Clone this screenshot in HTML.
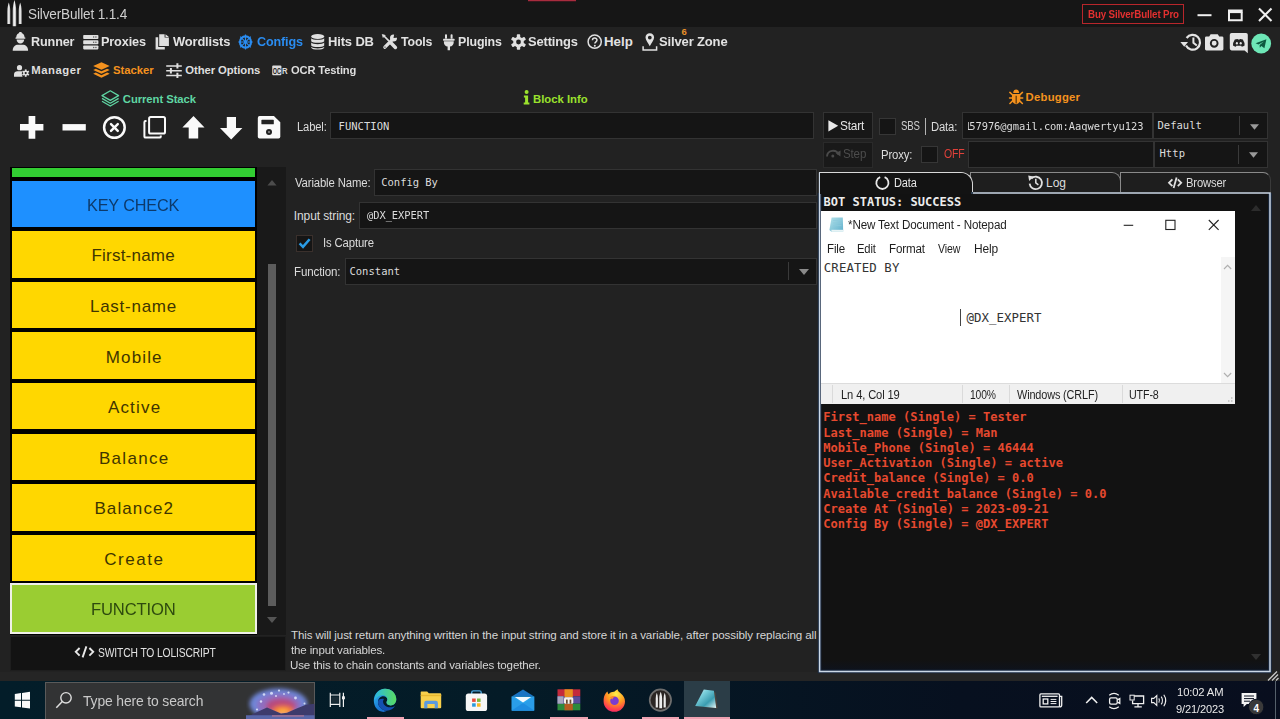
<!DOCTYPE html>
<html><head><meta charset="utf-8"><title>SilverBullet 1.1.4</title>
<style>
*{box-sizing:border-box;margin:0;padding:0}
html,body{width:1280px;height:719px;overflow:hidden;background:#222222;font-family:"Liberation Sans",sans-serif}
body{position:relative}
.a{position:absolute}
.t{position:absolute;white-space:pre;transform-origin:0 0}
.inp{position:absolute;background:#151515;border:1px solid #333333}
.blk{position:absolute;left:12px;width:243px;height:46px;background:#ffd700}
svg{position:absolute;overflow:visible}
.f0{font:400 13.8px/1 "Liberation Sans",sans-serif;color:#cfcfcf}
.f1{font:700 13.3px/1 "Liberation Sans",sans-serif;color:#e2e2e2}
.f2{font:700 13.3px/1 "Liberation Sans",sans-serif;color:#2a8cf0}
.f3{font:700 9.5px/1 "Liberation Sans",sans-serif;color:#e8912a}
.f4{font:700 11.3px/1 "Liberation Sans",sans-serif;color:#dedede}
.f5{font:700 11.3px/1 "Liberation Sans",sans-serif;color:#f5921e}
.f6{font:700 11.3px/1 "Liberation Sans",sans-serif;color:#5fd6a3}
.f7{font:700 11.3px/1 "Liberation Sans",sans-serif;color:#9be22d}
.f8{font:700 10.3px/1 "Liberation Sans",sans-serif;color:#e23030}
.f9{font:400 12px/1 "Liberation Sans",sans-serif;color:#dcdcdc}
.f10{font:400 10.5px/1 "DejaVu Sans Mono","Liberation Mono",monospace;color:#dcdcdc}
.f11{font:400 11.6px/1 "Liberation Sans",sans-serif;color:#d6d6d6}
.f12{font:400 12px/1 "Liberation Sans",sans-serif;color:#e6e6e6}
.f13{font:400 12px/1 "Liberation Sans",sans-serif;color:#4c4c4c}
.f14{font:400 12px/1 "Liberation Sans",sans-serif;color:#d0d0d0}
.f15{font:400 12px/1 "Liberation Sans",sans-serif;color:#e0413a}
.f16{font:700 12px/1 "DejaVu Sans Mono","Liberation Mono",monospace;color:#ececec}
.f17{font:400 12px/1 "Liberation Sans",sans-serif;color:#1e1e1e}
.f18{font:400 12.4px/1 "DejaVu Sans Mono","Liberation Mono",monospace;color:#333333}
.f19{font:400 17px/1 "Liberation Sans",sans-serif;color:#0d3a6b}
.f20{font:400 17px/1 "Liberation Sans",sans-serif;color:#3f3500}
.f21{font:400 17px/1 "Liberation Sans",sans-serif;color:#2e4a0e}
.f22{font:400 12px/1 "Liberation Sans",sans-serif;color:#e2e2e2}
.f23{font:400 15px/1 "Liberation Sans",sans-serif;color:#c9c9c9}
.f24{font:400 11.6px/1 "Liberation Sans",sans-serif;color:#e8e8e8}
.f25{font:700 10px/1 "Liberation Sans",sans-serif;color:#ffffff}
.f26{font:700 12px/1 "DejaVu Sans Mono","Liberation Mono",monospace;color:#e6492f}
</style></head><body>
<!-- title bar -->
<div class="a" style="left:0;top:0;width:1280px;height:27px;background:#161616"></div>
<div class="a" style="left:1082px;top:4px;width:102px;height:20px;border:1px solid #b8262b"></div>
<div class="a" style="left:528px;top:0;width:48px;height:2px;background:linear-gradient(180deg,#a82c3e 0,#a82c3e 50%,#3c161e 50%,#3c161e 100%)"></div>
<!-- app bottom strip -->
<div class="a" style="left:0;top:672px;width:1280px;height:10px;background:#252525"></div>

<!-- label input -->
<div class="inp" style="left:330px;top:112px;width:484px;height:27px"></div>

<!-- stack list -->
<div class="a" style="left:10px;top:167px;width:247px;height:468px;background:#000"></div>
<div class="a" style="left:257px;top:167px;width:29px;height:468px;background:#191919"></div>
<div class="a" style="left:12px;top:168px;width:243px;height:9px;background:#32cd32"></div>
<div class="blk" style="top:181px;height:46px;background:#1e90ff"></div>
<div class="blk" style="top:231px;height:47px"></div>
<div class="blk" style="top:282px;height:46px"></div>
<div class="blk" style="top:332px;height:47px"></div>
<div class="blk" style="top:383px;height:46px"></div>
<div class="blk" style="top:434px;height:46px"></div>
<div class="blk" style="top:484px;height:47px"></div>
<div class="blk" style="top:535px;height:46px"></div>
<div class="a" style="left:10px;top:583px;width:247px;height:50.5px;background:#9acd32;border:2px solid #f0f0e8"></div>
<!-- scrollbar -->
<div class="a" style="left:268px;top:264px;width:8px;height:342px;background:#5c5c5c"></div>
<svg style="left:267px;top:180.300px" width="10" height="5.500" viewBox="0 0 10 6"><path d="M0 6 L5 0 L10 6 Z" fill="#4c4c4c"/></svg>
<svg style="left:267px;top:617px" width="10" height="6" viewBox="0 0 10 6"><path d="M0 0 L5 6 L10 0 Z" fill="#555"/></svg>
<!-- switch button -->
<div class="a" style="left:10px;top:636px;width:275.500px;height:35px;background:#131313;border:1px solid #1e1e1e"></div>

<!-- block info inputs -->
<div class="inp" style="left:374px;top:168.5px;width:443px;height:27px"></div>
<div class="inp" style="left:359px;top:201.5px;width:458px;height:27px"></div>
<div class="inp" style="left:295.5px;top:235px;width:17px;height:17px;border-color:#3a302c"></div>
<div class="inp" style="left:345px;top:257.5px;width:472px;height:27px"></div>
<div class="a" style="left:788px;top:262px;width:1px;height:18px;background:#3a3a3a"></div>
<svg style="left:798.5px;top:268.5px" width="10" height="6" viewBox="0 0 10 6"><path d="M0 0 L5 6 L10 0 Z" fill="#8a8a8a"/></svg>

<!-- debugger toolbar -->
<div class="inp" style="left:822.5px;top:112px;width:50px;height:27px;background:#171717"></div>
<div class="inp" style="left:822.5px;top:141.5px;width:50px;height:26px;background:#191919;border-color:#2a2a2a"></div>
<div class="inp" style="left:879px;top:117.5px;width:17px;height:17px;border-color:#363636"></div>
<div class="a" style="left:925px;top:117.5px;width:1px;height:17.5px;background:#b4b4b4"></div>
<div class="inp" style="left:962px;top:112px;width:191px;height:27px"></div>
<div class="inp" style="left:1152.5px;top:112px;width:115.5px;height:27px"></div>
<div class="a" style="left:1239px;top:116px;width:1px;height:19px;background:#3a3a3a"></div>
<svg style="left:1249.5px;top:123.5px" width="9" height="6" viewBox="0 0 10 6"><path d="M0 0 L5 6 L10 0 Z" fill="#9a9a9a"/></svg>
<div class="inp" style="left:920.5px;top:145.5px;width:17.5px;height:17px;border-color:#363636"></div>
<div class="inp" style="left:968px;top:141px;width:186px;height:27px"></div>
<div class="inp" style="left:1154px;top:141px;width:113.5px;height:27px"></div>
<div class="a" style="left:1238px;top:145px;width:1px;height:19px;background:#3a3a3a"></div>
<svg style="left:1248.5px;top:152px" width="9" height="6" viewBox="0 0 10 6"><path d="M0 0 L5 6 L10 0 Z" fill="#9a9a9a"/></svg>

<!-- tabs -->
<div class="a" style="left:970px;top:172px;width:151px;height:21px;background:#1e1e1e;border:1px solid #8a8a8a;border-bottom:none;border-radius:0 9px 0 0"></div>
<div class="a" style="left:1120px;top:172px;width:150.500px;height:21px;background:#1e1e1e;border:1px solid #8a8a8a;border-bottom:none;border-right-color:#3a3a3a;border-radius:0 8px 0 0"></div>
<div class="a" style="left:819px;top:172px;width:154px;height:22px;background:#131313;border:1px solid #d8d8d8;border-bottom:none;border-radius:0 12px 0 0"></div>
<!-- debugger panel -->
<div class="a" style="left:819px;top:192px;width:451px;height:480px;background:linear-gradient(180deg,#121212 0,#121212 97.500%,#0d131e 100%)"></div>
<svg style="left:810px;top:185px" width="470" height="495" viewBox="810 185 470 495"><path d="M819.600 193 V671.500 H1270 V193" fill="none" stroke="#1c2c44" stroke-width="3.600"/><path d="M819.600 172.600 V671.500 H1270 V193 H973" fill="none" stroke="#ccd8e6" stroke-width="1.500"/><path d="M820 193 H973" stroke="#4a6a8c" stroke-width="1"/></svg>
<div class="a" style="left:820px;top:173px;width:151px;height:21px;background:#131313;border-radius:0 11px 0 0"></div>
<svg style="left:1250.5px;top:205px" width="10" height="6" viewBox="0 0 10 6"><path d="M0 6 L5 0 L10 6 Z" fill="#2c2c2c"/></svg>
<svg style="left:1250.5px;top:654px" width="10" height="6" viewBox="0 0 10 6"><path d="M0 0 L5 6 L10 0 Z" fill="#303030"/></svg>

<!-- notepad -->
<div class="a" style="left:821px;top:211px;width:414px;height:193px;background:#ffffff"></div>
<div class="a" style="left:1220.5px;top:257px;width:14.5px;height:126.5px;background:#f5f5f5"></div>
<div class="a" style="left:821px;top:383px;width:414px;height:21px;background:#f0f0f0;border-top:1px solid #dcdcdc"></div>
<div class="a" style="left:831.5px;top:385px;width:1px;height:18px;background:#dadada"></div>
<div class="a" style="left:961.5px;top:385px;width:1px;height:18px;background:#dadada"></div>
<div class="a" style="left:1009px;top:385px;width:1px;height:18px;background:#dadada"></div>
<div class="a" style="left:1121.5px;top:385px;width:1px;height:18px;background:#dadada"></div>
<div class="a" style="left:959.5px;top:308.5px;width:1px;height:17px;background:#444"></div>

<!-- taskbar -->
<div class="a" style="left:0;top:681px;width:1280px;height:38px;background:linear-gradient(90deg,#031d29 0%,#041b27 40%,#07101f 75%,#080e1e 100%)"></div>
<div class="a" style="left:45px;top:681.5px;width:270px;height:38px;background:#323334;border:1px solid #5a5a5a;border-bottom:none"></div>
<div class="a" style="left:684px;top:681px;width:45.5px;height:38px;background:#2b3d47"></div>
<div class="a" style="left:366.5px;top:717px;width:37.5px;height:2px;background:#eea2b2"></div>
<div class="a" style="left:550px;top:717px;width:37.5px;height:2px;background:#eea2b2"></div>
<div class="a" style="left:641.5px;top:717px;width:37.5px;height:2px;background:#eea2b2"></div>
<div class="a" style="left:684px;top:717px;width:45.5px;height:2px;background:#eea2b2"></div>
<div class="a" style="left:1275px;top:681px;width:1px;height:38px;background:#55606a"></div>
<!-- logo -->
<svg style="left:0;top:0" width="30" height="28" viewBox="0 0 30 28">
<defs><linearGradient id="lg" x1="0" x2="1"><stop offset="0" stop-color="#bdbdbd"/><stop offset=".5" stop-color="#f2f2f2"/><stop offset="1" stop-color="#a8a8a8"/></linearGradient></defs>
<path d="M8.8 2.6 C9.6 5 10.3 8 10.3 11 L10.3 24 L7.3 24 L7.3 11 C7.3 8 8 5 8.8 2.6Z" fill="url(#lg)"/>
<path d="M14.4 0 C15.4 3 16.2 7 16.2 11 L16.2 26.2 L12.7 26.2 L12.7 11 C12.7 7 13.5 3 14.4 0Z" fill="url(#lg)"/>
<path d="M20.2 2.6 C21 5 21.7 8 21.7 11 L21.7 24 L18.7 24 L18.7 11 C18.7 8 19.4 5 20.2 2.6Z" fill="url(#lg)"/>
</svg>
<!-- window controls -->
<svg style="left:1190px;top:0" width="90" height="27" viewBox="1190 0 90 27">
<path d="M1197.5 15.2 H1211.5" stroke="#f0f0f0" stroke-width="2"/>
<path d="M1229 12.5 V20.2 H1241.7 V12.5" stroke="#f0f0f0" stroke-width="2" fill="none"/>
<rect x="1228" y="9.5" width="14.7" height="3.6" fill="#f0f0f0"/>
<path d="M1259 8.5 L1271.5 21 M1271.5 8.5 L1259 21" stroke="#f0f0f0" stroke-width="2.1"/>
</svg>
<!-- Runner: user w/ hard hat -->
<svg style="left:12px;top:32px" width="17" height="19" viewBox="0 0 17 19" fill="#e0e0e0">
<path d="M4.2 5.6 C4.2 2.6 6 1.2 7.2 1 L7.2 0 L9.6 0 L9.6 1 C10.8 1.2 12.6 2.6 12.6 5.6 L13.3 5.6 L13.3 6.8 L3.5 6.8 L3.5 5.6Z"/>
<path d="M4.6 7.6 L12.2 7.6 C12.2 9.8 10.6 11.6 8.4 11.6 C6.2 11.6 4.6 9.8 4.6 7.6Z"/>
<path d="M0.7 18.7 C0.7 14.8 3.4 12.8 6 12.8 L10.8 12.8 C13.4 12.8 16.1 14.8 16.1 18.7Z"/>
</svg>
<!-- Proxies: server -->
<svg style="left:83px;top:35px" width="16" height="15" viewBox="0 0 16 15" fill="#e0e0e0">
<rect x="0.2" y="0" width="15.2" height="4" rx="0.8"/><rect x="0.2" y="5.3" width="15.2" height="4" rx="0.8"/><rect x="0.2" y="10.5" width="15.2" height="3.9" rx="0.8"/>
<g fill="#555"><circle cx="12.9" cy="2" r=".7"/><circle cx="10.7" cy="2" r=".7"/><circle cx="12.9" cy="7.3" r=".7"/><circle cx="10.7" cy="7.3" r=".7"/><circle cx="12.9" cy="12.5" r=".7"/><circle cx="10.7" cy="12.5" r=".7"/></g>
</svg>
<!-- Wordlists: copy file -->
<svg style="left:155px;top:34px" width="15" height="16" viewBox="0 0 15 16" fill="#e0e0e0">
<path d="M4.2 0.2 H9.6 V3.6 H13.9 V12 H4.2Z"/><path d="M10.5 0.2 L13.9 3 H10.5Z"/>
<path d="M0.6 3.2 H3.2 V13 H9.8 V15.5 H0.6Z"/>
</svg>
<!-- Configs: dharmachakra -->
<svg style="left:238.3px;top:34px" width="15" height="16" viewBox="-7.5 -8 15 16" fill="none" stroke="#2a8cf0">
<circle r="5.6" stroke-width="2.1"/><circle r="1.3" fill="#2a8cf0" stroke="none"/>
<g stroke-width="1.2"><path d="M0 -7.6V7.6M-7.2 0H7.2M-5.3 -5.3L5.3 5.3M5.3 -5.3L-5.3 5.3"/></g>
</svg>
<!-- Hits DB: database -->
<svg style="left:311.3px;top:34px" width="14" height="16" viewBox="0 0 14 16" fill="#e0e0e0">
<ellipse cx="6.7" cy="2.6" rx="6.5" ry="2.5"/>
<path d="M0.2 4.3 C1.5 6.3 11.9 6.3 13.2 4.3 V7.2 C11.9 9.4 1.5 9.4 0.2 7.2Z"/>
<path d="M0.2 8.6 C1.5 10.7 11.9 10.7 13.2 8.6 V11.4 C11.9 13.6 1.5 13.6 0.2 11.4Z"/>
<path d="M0.2 12.8 C1.5 14.9 11.9 14.9 13.2 12.8 V13.4 C12.5 16.3 0.9 16.3 0.2 13.4Z"/>
</svg>
<!-- Tools -->
<svg style="left:382px;top:34px" width="16" height="16" viewBox="0 0 16 16" fill="none" stroke="#e0e0e0" stroke-linecap="round">
<path d="M2.900 13.200 L9.400 6.600" stroke-width="3.300"/>
<circle cx="11.500" cy="4.100" r="3.500" fill="#e0e0e0" stroke="none"/>
<path d="M11.500 4.100 L12.300 -0.500 L16.500 3.400Z" fill="#222" stroke="none"/>
<circle cx="3" cy="13.100" r="0.700" fill="#222" stroke="none"/>
<path d="M2 2 L6.600 6.600" stroke-width="1.700"/><path d="M0.600 0.600 L3.200 1.400 L1.400 3.200Z" fill="#e0e0e0" stroke-width="0.800"/>
<path d="M8.600 8.600 L13.400 13.400" stroke-width="3.500"/>
</svg>
<!-- Plugins: plug -->
<svg style="left:442.8px;top:33.5px" width="12" height="17" viewBox="0 0 12 17" fill="#e0e0e0">
<rect x="2" y="0.2" width="2" height="4.6" rx="0.9"/><rect x="7.6" y="0.2" width="2" height="4.6" rx="0.9"/>
<rect x="0.1" y="4.8" width="11.4" height="1.9" rx="0.5"/>
<path d="M0.9 7.3 H10.7 V8.4 C10.7 10.8 9 12.2 7 12.6 V16.2 H4.6 V12.6 C2.6 12.2 0.9 10.8 0.9 8.4Z"/>
</svg>
<!-- Settings: gear -->
<svg style="left:511.4px;top:34.3px" width="15" height="16" viewBox="-7.5 -8 15 16">
<g fill="#e0e0e0"><circle r="5.3"/>
<g id="gt"><rect x="-1.7" y="-7.7" width="3.4" height="15.4" rx="0.7"/></g>
<use href="#gt" transform="rotate(60)"/><use href="#gt" transform="rotate(120)"/></g>
<circle r="2.4" fill="#222"/>
</svg>
<!-- Help -->
<svg style="left:586.5px;top:34.2px" width="16" height="16" viewBox="0 0 16 16">
<circle cx="7.7" cy="7.7" r="6.6" fill="none" stroke="#e0e0e0" stroke-width="1.5"/>
<path d="M5.5 6.2 C5.5 3.4 10 3.4 10 6.1 C10 7.8 7.8 7.8 7.8 9.6" fill="none" stroke="#e0e0e0" stroke-width="1.5"/><circle cx="7.8" cy="11.7" r="1" fill="#e0e0e0"/>
</svg>
<!-- Silver Zone: pin -->
<svg style="left:641.5px;top:32.8px" width="16" height="18" viewBox="0 0 16 18">
<path d="M7.8 0.3 C10.4 0.3 12.1 2.2 12.1 4.5 C12.1 7.3 9.2 10.2 7.8 13.3 C6.4 10.2 3.5 7.3 3.5 4.5 C3.5 2.2 5.2 0.3 7.8 0.3Z M7.8 2.7 A1.9 1.9 0 1 0 7.8 6.5 A1.9 1.9 0 1 0 7.8 2.7Z" fill="#e0e0e0" fill-rule="evenodd"/>
<path d="M1.1 13.3 V16.9 H14.6 V13.3" fill="none" stroke="#e0e0e0" stroke-width="1.5"/>
</svg>
<!-- Manager: user-cog -->
<svg style="left:14px;top:64.5px" width="15" height="12" viewBox="0 0 15 12" fill="#e0e0e0">
<circle cx="5.5" cy="2.7" r="2.6"/>
<path d="M0 11.8 V9.4 C0 7.4 1.6 6.2 3.4 6.2 H7 C7.6 6.2 8 6.4 8.2 6.6 C7.6 8 7.8 10.4 8.6 11.8Z"/>
<g transform="translate(11.7 8.1)"><circle r="2.5"/><rect x="-0.9" y="-3.7" width="1.8" height="7.4"/><rect x="-0.9" y="-3.7" width="1.8" height="7.4" transform="rotate(60)"/><rect x="-0.9" y="-3.7" width="1.8" height="7.4" transform="rotate(120)"/><circle r="1.1" fill="#222"/></g>
</svg>
<!-- Stacker: layers (solid) -->
<svg style="left:92.8px;top:62px" width="17" height="16" viewBox="0 0 17 16" fill="#f5921e">
<path d="M8.45 0.2 L16.7 4 L8.45 7.8 L0.2 4Z"/>
<path d="M2.8 6.7 L8.45 9.3 L14.1 6.7 L16.7 7.9 L8.45 11.7 L0.2 7.9Z"/>
<path d="M2.8 10.6 L8.45 13.2 L14.1 10.6 L16.7 11.8 L8.45 15.7 L0.2 11.8Z"/>
</svg>
<!-- Other options: sliders -->
<svg style="left:165.5px;top:62.5px" width="16" height="15" viewBox="0 0 16 15" stroke="#e0e0e0" fill="none">
<path d="M0.2 2.9 H15.8 M0.2 7.7 H15.8 M0.2 12.5 H15.8" stroke-width="1.5"/>
<path d="M11.4 0.3 V5.6 M4.9 5 V10.4 M11.4 9.8 V15" stroke-width="2"/>
</svg>
<!-- OCR icon -->
<svg style="left:272px;top:65px" width="16" height="11" viewBox="0 0 16 11">
<rect x="0.2" y="0.4" width="9.2" height="9.9" rx="1" fill="#dcdcdc"/>
<text x="0.7" y="8.5" font-family="Liberation Sans,sans-serif" font-weight="700" font-size="8.2" fill="#222" textLength="8.2" lengthAdjust="spacingAndGlyphs">OC</text>
<text x="10" y="9.2" font-family="Liberation Sans,sans-serif" font-weight="700" font-size="9.6" fill="#dcdcdc" textLength="5.6" lengthAdjust="spacingAndGlyphs">R</text>
</svg>
<!-- Current stack: layers outline -->
<svg style="left:101px;top:90.3px" width="19" height="17" viewBox="0 0 19 17" fill="none" stroke="#5fd6a3" stroke-width="1.3" stroke-linejoin="round">
<path d="M9.3 0.8 L17.6 5.6 L9.3 10.4 L1 5.6Z"/>
<path d="M1 8.4 L9.3 13.2 L17.6 8.4"/>
<path d="M1 11.2 L9.3 16 L17.6 11.2"/>
</svg>
<!-- toolbar -->
<svg style="left:0;top:110px" width="300" height="34" viewBox="0 110 300 34">
<g fill="#fafafa">
<path d="M28.6 115.9 H35.3 V124.1 H43.4 V130.5 H35.3 V138.8 H28.6 V130.5 H20 V124.1 H28.6Z"/>
<rect x="62.5" y="124.1" width="23.3" height="6.4"/>
<path d="M193.5 116.1 L204.5 127.5 H198.2 V138.6 H188.7 V127.5 H182.4Z"/>
<path d="M231.2 139.5 L220 128 H226.8 V117 H236 V128 H242.4Z"/>
<path d="M259.6 116.1 H273.9 L280.3 122.3 V136.8 Q280.3 138.6 278.5 138.6 H259.6 Q257.8 138.6 257.8 136.8 V117.9 Q257.8 116.1 259.6 116.1Z"/>
</g>
<rect x="261.4" y="119.8" width="12.4" height="4.5" rx="0.6" fill="#222"/>
<circle cx="269" cy="132" r="3" fill="#222"/><circle cx="269" cy="132" r="1.1" fill="#8a8a8a"/>
<circle cx="114.400" cy="127.500" r="10.300" fill="none" stroke="#fafafa" stroke-width="2.500"/>
<path d="M111 124.100 L117.800 130.900 M117.800 124.100 L111 130.900" stroke="#fafafa" stroke-width="2.400" stroke-linecap="round"/>
<path d="M146.5 121 H145.5 Q144.4 121 144.4 122.2 V136.4 Q144.4 137.6 145.6 137.6 H159.6 Q160.8 137.6 160.8 136.4 V135.4" fill="none" stroke="#fafafa" stroke-width="2"/>
<rect x="149.1" y="117.1" width="15.9" height="16.4" rx="1.6" fill="none" stroke="#fafafa" stroke-width="2"/>
</svg>
<!-- Block info i -->
<svg style="left:522px;top:89px" width="9" height="17" viewBox="0 0 9 17" fill="#9be22d">
<circle cx="4.6" cy="3" r="2"/>
<path d="M1.9 6.6 H6.1 V13.6 H7.4 V15.5 H1.7 V13.6 H3.1 V8.5 H1.9Z"/>
</svg>
<!-- Debugger bug -->
<svg style="left:1008.5px;top:88.5px" width="14.300" height="15.600" viewBox="0 0 15 16">
<g fill="none" stroke="#f5921e" stroke-width="1.6" stroke-linecap="round"><path d="M0.9 3.4 L4 6.2 M14.1 3.4 L11 6.2 M0.6 9.2 H14.4 M1 15 L4 12 M14 15 L11 12"/></g>
<path d="M4.4 3.9 C4.4 -0.9 10.6 -0.9 10.6 3.9Z" fill="#f5921e"/>
<path d="M3.1 5.1 H11.9 V10.4 C11.9 14 9.6 15.7 7.5 15.7 C5.4 15.7 3.1 14 3.1 10.4Z" fill="#f5921e"/>
<path d="M7.5 6.8 V15" stroke="#3a2408" stroke-width="1.1"/>
</svg>
<!-- top-right icons -->
<svg style="left:1178px;top:30px" width="100" height="26" viewBox="1178 30 100 26">
<!-- history -->
<path d="M1186.6 38 A7.4 7.4 0 1 1 1186 45.6" fill="none" stroke="#e4e4e4" stroke-width="2.2"/>
<path d="M1180.4 42 H1188 L1184.2 46.8Z" fill="#e4e4e4"/>
<path d="M1193.4 37.6 V42.8 L1196.8 45.5" fill="none" stroke="#e4e4e4" stroke-width="2"/>
<!-- camera -->
<path d="M1206.4 36.4 H1209.2 L1210.6 34.2 H1217.8 L1219.2 36.4 H1222 Q1223.4 36.4 1223.4 37.8 V49.1 Q1223.4 50.5 1222 50.5 H1206.4 Q1205 50.5 1205 49.1 V37.8 Q1205 36.4 1206.4 36.4Z" fill="#e4e4e4"/>
<circle cx="1214.2" cy="43.3" r="3.4" fill="none" stroke="#222" stroke-width="1.9"/>
<!-- discord -->
<path d="M1231.6 33 H1246 Q1247.8 33 1247.8 34.8 V53.2 L1244.6 50.4 H1231.6 Q1229.8 50.4 1229.8 48.6 V34.8 Q1229.8 33 1231.6 33Z" fill="#e4e4e4"/>
<path d="M1234.8 39.6 Q1236.6 38.8 1237.6 39 L1238 39.6 H1239.6 L1240 39 Q1241 38.8 1242.8 39.6 Q1244.8 42.6 1244.6 45.6 Q1243.4 46.6 1241.8 46.8 L1241.2 45.8 H1236.4 L1235.8 46.8 Q1234.2 46.6 1233 45.6 Q1232.8 42.6 1234.8 39.6Z" fill="#222"/>
<ellipse cx="1236.9" cy="43.2" rx="1.05" ry="1.2" fill="#e4e4e4"/><ellipse cx="1240.7" cy="43.2" rx="1.05" ry="1.2" fill="#e4e4e4"/>
<!-- telegram -->
<circle cx="1261.2" cy="43.5" r="9.9" fill="#6ee7b7"/>
<path d="M1255.6 43.3 L1266.4 39.2 L1264.4 48.2 L1261.4 46 L1259.8 47.8 L1259.6 45 L1264 41.4 L1258.4 44.4Z" fill="#0e5a40"/>
</svg>
<!-- debugger buttons icons -->
<svg style="left:820px;top:110px" width="60" height="60" viewBox="820 110 60 60">
<path d="M828.4 120.2 L838.2 125.8 L828.4 131.4Z" fill="#e8e8e8"/>
<path d="M827 156.6 A6 6 0 0 1 838.6 154.6" fill="none" stroke="#4a4a4a" stroke-width="1.9"/>
<path d="M835.6 153 L840.6 150.6 L840.4 156.4Z" fill="#4a4a4a"/>
<circle cx="832.8" cy="156" r="1.5" fill="#4a4a4a"/>
</svg>
<!-- tab icons -->
<svg style="left:870px;top:172px" width="320" height="22" viewBox="870 172 320 22">
<path d="M884.6 177.2 A6.1 6.1 0 1 1 880.2 177.2" fill="none" stroke="#e8e8e8" stroke-width="1.8"/>
<path d="M1031.3 178.6 A6.2 6.2 0 1 1 1029.6 183.6" fill="none" stroke="#e0e0e0" stroke-width="1.8"/>
<path d="M1028.2 175.6 L1033.6 176.4 L1029.2 181Z" fill="#e0e0e0"/>
<path d="M1035.8 178.8 V182.8 L1038.4 184.8" fill="none" stroke="#e0e0e0" stroke-width="1.5"/>
<path d="M1172.4 179.4 L1169 182.8 L1172.4 186.2 M1177.8 179.4 L1181.2 182.8 L1177.8 186.2 M1176.6 177.6 L1173.6 188" fill="none" stroke="#e0e0e0" stroke-width="1.8"/>
</svg>
<!-- switch </> icon -->
<svg style="left:74px;top:645px" width="22" height="14" viewBox="0 0 22 14"><path d="M5.6 3 L1.8 6.8 L5.600 10.6 M15.400 3 L19.2 6.8 L15.400 10.6 M12.400 1.400 L8.600 12.400" fill="none" stroke="#e8e8e8" stroke-width="1.9"/></svg>
<!-- checkmark -->
<svg style="left:295.5px;top:235px" width="17" height="17" viewBox="0 0 17 17"><path d="M3.600 8.400 L7 11.800 L13.600 4.200" fill="none" stroke="#2a9be4" stroke-width="2.500"/></svg>
<!-- notepad icon + controls -->
<svg style="left:821px;top:211px" width="414" height="193" viewBox="821 211 414 193">
<defs><linearGradient id="np" x1="0" y1="0" x2="1" y2="1"><stop offset="0" stop-color="#b4e2ea"/><stop offset="1" stop-color="#5fb0cc"/></linearGradient></defs>
<path d="M831.600 217.600 L842.800 217.400 L843.200 231.600 L831.400 231.800 L829.400 230Z" fill="url(#np)"/>
<path d="M831.400 229.800 H843.200 V231.800 H831.400Z" fill="#e8f4f6"/>
<path d="M833 220.500 H841.500 M833 223 H841.500 M833 225.500 H841.500" stroke="#8ccadc" stroke-width="0.7"/>
<path d="M1123.700 225.300 H1133.200" stroke="#222" stroke-width="1.1"/>
<rect x="1165.800" y="220.300" width="9.200" height="9.200" fill="none" stroke="#222" stroke-width="1.1"/>
<path d="M1208.800 220 L1218.600 229.800 M1218.600 220 L1208.800 229.800" stroke="#222" stroke-width="1.100"/>
<path d="M1224 269 L1227.600 265.400 L1231.200 269" fill="none" stroke="#b0b0b0" stroke-width="1.2"/>
<path d="M1224 373 L1227.600 376.600 L1231.200 373" fill="none" stroke="#b0b0b0" stroke-width="1.2"/>
<path d="M1231 401 h1.500 M1228 401 h1.500 M1231 398 h1.500" stroke="#bbb" stroke-width="1.500"/>
</svg>
<!-- resize grip -->
<svg style="left:1266px;top:670px" width="14" height="12" viewBox="0 0 14 12"><path d="M2 10.500 L11 1.500 M6 10.500 L12 4.500 M10 10.500 L12.500 8" stroke="#c8c8c8" stroke-width="1.300"/></svg>
<!-- taskbar icons -->
<svg style="left:0;top:681px" width="1280" height="38" viewBox="0 681 1280 38">
<defs>
<radialGradient id="cl" cx="278" cy="702" r="30" gradientUnits="userSpaceOnUse" gradientTransform="translate(0 245.700) scale(1 0.650)"><stop offset="0" stop-color="#c84878"/><stop offset=".45" stop-color="#8a6ac0"/><stop offset=".8" stop-color="#7a9ae4"/><stop offset="1" stop-color="#5a74c8" stop-opacity="0"/></radialGradient>
<radialGradient id="sun" cx="282" cy="710" r="13" gradientUnits="userSpaceOnUse" gradientTransform="translate(0 284) scale(1 0.600)"><stop offset="0" stop-color="#ffb040"/><stop offset=".6" stop-color="#f07030"/><stop offset="1" stop-color="#d04870" stop-opacity="0"/></radialGradient>
<linearGradient id="edg" x1="0" y1="0" x2="1" y2="1"><stop offset="0" stop-color="#36c6f0"/><stop offset=".5" stop-color="#1a7ad8"/><stop offset="1" stop-color="#1458b8"/></linearGradient>
<linearGradient id="edg2" x1="0" y1="0" x2="1" y2="0"><stop offset="0" stop-color="#2ab8e0"/><stop offset="1" stop-color="#5adc60"/></linearGradient>
<radialGradient id="ff" cx="616" cy="694" r="20" gradientUnits="userSpaceOnUse"><stop offset="0" stop-color="#fff04a"/><stop offset=".45" stop-color="#ff9a20"/><stop offset=".8" stop-color="#ff3a50"/><stop offset="1" stop-color="#e8207a"/></radialGradient>
<linearGradient id="npd" x1="0" y1="0" x2="1" y2="1"><stop offset="0" stop-color="#f4ffff"/><stop offset=".3" stop-color="#7cd0dc"/><stop offset=".65" stop-color="#3a9cb0"/><stop offset="1" stop-color="#e8f8f8"/></linearGradient>
<filter id="bl" x="-20%" y="-20%" width="140%" height="140%"><feGaussianBlur stdDeviation="2.200"/></filter><filter id="bl2" x="-20%" y="-20%" width="140%" height="140%"><feGaussianBlur stdDeviation="0.500"/></filter>
<clipPath id="sbx"><rect x="246" y="683" width="68.500" height="36"/></clipPath>
</defs>
<!-- windows logo -->
<path d="M14.800 694 L21 693.100 V699.700 H14.800Z M22 693 L30 691.800 V699.700 H22Z M14.800 700.700 H21 V707.300 L14.800 706.400Z M22 700.700 H30 V708.600 L22 707.400Z" fill="#fafafa"/>
<!-- search icon -->
<circle cx="66" cy="697.800" r="5.200" fill="none" stroke="#dedede" stroke-width="1.400"/><path d="M62.300 701.600 L56.300 707.800" stroke="#dedede" stroke-width="1.500"/>
<!-- search highlight image -->
<g clip-path="url(#sbx)">
<g filter="url(#bl)">
<ellipse cx="278.500" cy="704" rx="29" ry="15.500" fill="#6f86d8"/>
<ellipse cx="279" cy="705" rx="22" ry="11" fill="#8f6ec0"/>
<ellipse cx="281" cy="706" rx="15" ry="7.500" fill="#b8487c"/>
<ellipse cx="283" cy="710.500" rx="11" ry="5" fill="#f47830"/>
<ellipse cx="283" cy="711.500" rx="6" ry="2.600" fill="#ffb648"/>
</g>
<g fill="#e8eeff" opacity=".8" filter="url(#bl2)"><circle cx="264" cy="694.500" r="1.300"/><circle cx="271.500" cy="693.200" r="1.500"/><circle cx="288.500" cy="692.600" r="1.100"/><circle cx="295.500" cy="698" r="1.400"/><circle cx="261" cy="701.500" r="1.200"/><circle cx="257" cy="709.500" r="1.100"/><circle cx="279" cy="690.600" r="1.100"/><circle cx="304.500" cy="703.500" r="1"/><circle cx="276" cy="696" r="1"/><circle cx="284" cy="694" r="0.900"/></g>
<path d="M246 717.500 L256 712.500 L267 707.400 L274 710.400 L281 713.400 L287 712.800 L296 708.800 L306 704.800 L315 703.800 V719 H246Z" fill="#3e3a6c" filter="url(#bl2)"/>
<path d="M246 715.200 H315 V719 H246Z" fill="#5866a8"/><rect x="272" y="715.200" width="32" height="1.400" fill="#c87a90" opacity=".7"/>
</g>
<!-- task view -->
<g fill="none" stroke="#f0f0f0" stroke-width="1.200"><path d="M330.300 692.700 V706.900 M339.800 692.700 V706.900 M330.300 695 H339.800 M330.300 704.400 H339.800 M343.400 692.700 V706.900"/><rect x="331.300" y="696.600" width="7.500" height="6.200" stroke="none" fill="#1a2c36"/></g><rect x="342" y="696.300" width="2.900" height="3" fill="#f0f0f0"/>
<!-- edge -->
<path d="M385 688.800 C391.500 688.800 396.300 693.500 396.300 699.300 C396.300 703 393.800 705.400 390.600 705.400 C388 705.400 386.500 704.200 386.500 702.600 C386.500 701.400 387.400 700.800 387.400 699.500 C387.400 697.600 385.600 696.200 383.300 696.200 C380.200 696.200 378 698.700 378 701.900 C378 706.400 381.800 710 386.600 710.800 C385.800 711.500 384.600 711.900 383.400 711.900 C378 711.900 373.800 707 373.800 700.600 C373.800 694 378.700 688.800 385 688.800Z" fill="url(#edg)"/>
<path d="M385 688.800 C391.500 688.800 396.300 693.500 396.300 699.300 C396.300 703 393.800 705.400 390.600 705.400 C388 705.400 386.500 704.200 386.500 702.600 C386.500 701.400 387.400 700.800 387.400 699.500 C387.400 697 385 695 382 695.200 C378.800 695.400 376 697.600 374.600 700 C375 693.800 379.200 688.800 385 688.800Z" fill="url(#edg2)"/>
<path d="M378 701.900 C378 706.400 381.800 710 386.600 710.800 C390.600 710.600 393.800 708.400 395 706 C392 708 386.500 707.800 384 704.400 C382.600 702.400 382.900 700.200 383.900 698.900 C380.600 698.400 378 699.600 378 701.900Z" fill="#1450b0"/>
<!-- explorer -->
<path d="M421.400 691.400 H427.200 L428.800 693.200 H440.200 Q441.200 693.200 441.200 694.200 V707.300 Q441.200 708.300 440.200 708.300 H421.700 Q420.700 708.300 420.700 707.300 V692.100 Q420.700 691.400 421.400 691.400Z" fill="#f8d04c"/>
<path d="M420.700 694.800 H441.200 V696.200 H420.700Z" fill="#e8b830"/>
<path d="M424.200 708.300 V702.900 Q424.200 700.700 426.400 700.700 H435.700 Q437.900 700.700 437.900 702.900 V708.300 H434.700 V704 H427.400 V708.300Z" fill="#5a9ae0"/>
<!-- store -->
<path d="M471.700 694 V692.600 Q471.700 690.900 473.400 690.900 H479.500 Q481.200 690.900 481.200 692.600 V694" fill="none" stroke="#4aa4dc" stroke-width="1.400"/>
<rect x="465.800" y="693.600" width="21.300" height="17.400" rx="2.600" fill="#f6f6f6"/>
<rect x="472.100" y="698.500" width="3.600" height="3.400" fill="#e84c3c"/><rect x="477" y="698.500" width="3.600" height="3.400" fill="#7cba3c"/><rect x="472.100" y="703.300" width="3.600" height="3.400" fill="#2a9adc"/><rect x="477" y="703.300" width="3.600" height="3.400" fill="#f8b820"/>
<!-- mail -->
<path d="M511.700 696.600 L523 689.500 L534.200 696.600Z" fill="#1a74c4"/>
<rect x="511.700" y="696.400" width="22.500" height="14.200" fill="#2aa4ec"/>
<path d="M514.800 697 H531.200 L523 702.600Z" fill="#f4fafe"/>
<path d="M511.700 696.600 L523 704.400 L534.200 696.600 V710.600 H511.700Z" fill="#2a9de8"/>
<path d="M511.700 710.600 L523 703 L534.200 710.600Z" fill="#1e8ce0"/>
<!-- winrar -->
<rect x="557.500" y="689.300" width="22.800" height="7" fill="#c42a3c"/><rect x="557.500" y="696.300" width="22.800" height="7.400" fill="#5a4c9c"/><rect x="557.500" y="703.700" width="22.800" height="6.600" fill="#2c8a3c"/>
<rect x="557.500" y="696.300" width="6" height="7.400" fill="#a8a8c0"/>
<rect x="564.500" y="689.300" width="8.300" height="8" fill="#e89020"/><rect x="564.500" y="703.700" width="8.300" height="6.600" fill="#b85c20"/>
<rect x="564" y="697.300" width="9.300" height="6.400" rx="1.500" fill="#f4f0e8"/><rect x="566" y="699.600" width="1.700" height="4.100" fill="#6a4a30"/><rect x="569.600" y="699.600" width="1.700" height="4.100" fill="#6a4a30"/>
<!-- firefox -->
<path d="M604 697 C604.800 694 606.200 692.200 607.600 691.400 C607.600 692.600 608 693.600 608.800 694.200 C610 692.400 612.600 691.600 614.200 691.800 C615.400 690.400 616.800 689.600 617.600 689.200 C617.800 691 619 692 620.600 693.200 C623.400 695.200 625 698.200 625 701.400 C625 707.200 620.200 711.800 614.400 711.800 C608.400 711.800 603.600 707.200 603.600 701.400 C603.600 699.800 603.600 698.400 604 697Z" fill="url(#ff)"/>
<circle cx="614.500" cy="700.800" r="4.300" fill="#7a3cd0"/><path d="M609.400 697.600 C611 696 614.200 695.600 616 696.600 C613.800 696.800 612.600 698 612.400 699.600 C611.400 698.600 610.400 698 609.400 697.600Z" fill="#ff8a28"/>
<!-- silverbullet -->
<circle cx="660.400" cy="700.100" r="10.700" fill="#2a2523" stroke="#6e6e6e" stroke-width="1.700"/>
<path d="M656.800 692.800 C657.500 694.500 657.900 696.500 657.900 698.500 V707.500 H655.700 V698.500 C655.700 696.500 656.100 694.500 656.800 692.800Z M660.700 691.800 C661.500 693.700 662.100 696 662.100 698.500 V708.300 H659.300 V698.500 C659.300 696 659.900 693.700 660.700 691.800Z M664.700 692.800 C665.400 694.500 665.800 696.500 665.800 698.500 V707.500 H663.600 V698.500 C663.600 696.500 664 694.500 664.700 692.800Z" fill="#ececec"/>
<!-- notepad active -->
<path d="M705.500 691 L715.600 692.400 L717.800 708.600 L698 706.600Z" fill="#5a4438" opacity=".7"/>
<path d="M703.800 689.600 L713.900 690.800 L716.200 708 L695.200 706Z" fill="url(#npd)"/>
<!-- tray -->
<g fill="none" stroke="#f0f0f0" stroke-width="1.300">
<rect x="1039.900" y="693.900" width="19.600" height="13" rx="1"/><path d="M1059.500 696.400 H1061.700 V705 Q1061.700 706.900 1059.600 706.900"/><path d="M1041.800 696.300 H1057.600"/><rect x="1043.200" y="699" width="4.600" height="4.900"/><path d="M1050.600 699.400 H1056.400 M1050.600 701.500 H1056.400 M1050.600 703.600 H1056.400" stroke-width="1"/>
<path d="M1086.200 703 L1091.700 697.400 L1097.200 703" stroke-width="1.500"/>
<rect x="1109.600" y="697.800" width="7.600" height="6.300" rx="1.400"/><path d="M1117.400 699.800 L1119.800 698.600 V703.400 L1117.400 702.200"/><path d="M1109.200 695.200 A7.800 7.800 0 0 1 1118.800 695.200 M1109.200 706.800 A7.800 7.800 0 0 0 1118.800 706.800" stroke-width="1.100"/>
<path d="M1134.200 696 H1143.600 V703.700 H1132.600 V700.600"/><path d="M1138 703.700 V706.700 M1134.400 706.900 H1141.800"/><rect x="1130" y="695.200" width="4.200" height="4.800" stroke-width="1"/>
<path d="M1151.600 698.400 H1153.800 L1156.800 695.600 V705.400 L1153.800 702.600 H1151.600Z" stroke-width="1.100"/><path d="M1158.800 698.400 Q1160.200 700.500 1158.800 702.600 M1161.200 696.600 Q1163.800 700.500 1161.200 704.400 M1163.800 694.800 Q1167.600 700.500 1163.800 706.200" stroke-width="1.100"/>
</g>
<!-- notification -->
<path d="M1241.600 693 H1256.400 V704 H1246.800 L1243.600 707 V704 H1241.600Z" fill="#f4f4f4"/><path d="M1244 696 H1254 M1244 698.600 H1254 M1244 701.200 H1250" stroke="#0a1020" stroke-width="1"/>
<circle cx="1256.200" cy="707" r="7.700" fill="#3a3a3a" stroke="#0a1020" stroke-width="1"/>
</svg>

<!-- text -->
<div class="t f0" style="left:28.0px;top:7.8px;letter-spacing:-0.15px;transform:scaleX(0.983)">SilverBullet 1.1.4</div>
<div class="t f1" style="left:31.0px;top:35.0px;letter-spacing:-0.15px;transform:scaleX(0.950)">Runner</div>
<div class="t f1" style="left:101.0px;top:35.0px;letter-spacing:-0.15px;transform:scaleX(0.954)">Proxies</div>
<div class="t f1" style="left:172.5px;top:35.0px;letter-spacing:-0.15px;transform:scaleX(0.969)">Wordlists</div>
<div class="t f2" style="left:256.5px;top:35.0px;letter-spacing:-0.15px;transform:scaleX(0.946)">Configs</div>
<div class="t f1" style="left:327.5px;top:35.0px;letter-spacing:-0.15px;transform:scaleX(0.976)">Hits DB</div>
<div class="t f1" style="left:401.0px;top:35.0px;letter-spacing:-0.15px;transform:scaleX(0.928)">Tools</div>
<div class="t f1" style="left:458.1px;top:35.0px;letter-spacing:-0.15px;transform:scaleX(0.933)">Plugins</div>
<div class="t f1" style="left:528.0px;top:35.0px;letter-spacing:-0.15px;transform:scaleX(0.971)">Settings</div>
<div class="t f1" style="left:604.0px;top:35.0px;letter-spacing:0.00px">Help</div>
<div class="t f1" style="left:659.0px;top:35.0px;letter-spacing:-0.15px;transform:scaleX(0.978)">Silver Zone</div>
<div class="t f3" style="left:681.4px;top:26.6px;letter-spacing:0.00px">6</div>
<div class="t f4" style="left:31.2px;top:65.0px;letter-spacing:0.56px">Manager</div>
<div class="t f5" style="left:113.0px;top:65.0px;letter-spacing:-0.04px">Stacker</div>
<div class="t f4" style="left:185.3px;top:65.0px;letter-spacing:-0.08px">Other Options</div>
<div class="t f4" style="left:291.2px;top:65.0px;letter-spacing:-0.15px;transform:scaleX(0.989)">OCR Testing</div>
<div class="t f6" style="left:122.8px;top:94.0px;letter-spacing:-0.07px">Current Stack</div>
<div class="t f7" style="left:533.0px;top:94.0px;letter-spacing:0.00px">Block Info</div>
<div class="t f5" style="left:1025.6px;top:92.4px;letter-spacing:0.24px">Debugger</div>
<div class="t f8" style="left:1088.4px;top:10.3px;letter-spacing:-0.15px;transform:scaleX(0.947)">Buy SilverBullet Pro</div>
<div class="t f9" style="left:296.9px;top:120.8px;letter-spacing:-0.15px;transform:scaleX(0.932)">Label:</div>
<div class="t f10" style="left:338.6px;top:121.0px;letter-spacing:0.02px">FUNCTION</div>
<div class="t f9" style="left:294.8px;top:177.2px;letter-spacing:-0.15px;transform:scaleX(0.946)">Variable Name:</div>
<div class="t f10" style="left:381.3px;top:177.3px;letter-spacing:-0.04px">Config By</div>
<div class="t f9" style="left:293.8px;top:210.0px;letter-spacing:-0.11px">Input string:</div>
<div class="t f10" style="left:366.7px;top:210.2px;letter-spacing:-0.05px;transform:scaleX(0.991)">@DX_EXPERT</div>
<div class="t f9" style="left:323.1px;top:237.3px;letter-spacing:-0.15px;transform:scaleX(0.944)">Is Capture</div>
<div class="t f9" style="left:293.8px;top:266.0px;letter-spacing:-0.15px;transform:scaleX(0.964)">Function:</div>
<div class="t f10" style="left:349.4px;top:265.6px;letter-spacing:0.03px">Constant</div>
<div class="t f11" style="left:291.0px;top:628.6px;letter-spacing:-0.11px">This will just return anything written in the input string and store it in a variable, after possibly replacing all</div>
<div class="t f11" style="left:291.0px;top:643.5px;letter-spacing:-0.15px;transform:scaleX(0.998)">the input variables.</div>
<div class="t f11" style="left:290.0px;top:658.6px;letter-spacing:-0.15px;transform:scaleX(0.998)">Use this to chain constants and variables together.</div>
<div class="t f12" style="left:840.0px;top:120.2px;letter-spacing:-0.15px;transform:scaleX(0.983)">Start</div>
<div class="t f13" style="left:842.8px;top:148.4px;letter-spacing:-0.15px;transform:scaleX(0.962)">Step</div>
<div class="t f14" style="left:900.7px;top:120.1px;letter-spacing:-0.15px;transform:scaleX(0.802)">SBS</div>
<div class="t f9" style="left:930.6px;top:120.5px;letter-spacing:-0.15px;transform:scaleX(0.938)">Data:</div>
<div class="a" style="left:967.6px;top:119.0px;width:180px;height:16.5px;overflow:hidden"><div class="t f10" style="left:-4.2px;top:2px;letter-spacing:-0.05px;transform:scaleX(0.992)"><span style="position:relative;left:1.7px">1</span>57976@gmail.com:Aaqwertyu123</div></div>
<div class="t f10" style="left:1157.5px;top:120.1px;letter-spacing:0.02px">Default</div>
<div class="t f9" style="left:881.3px;top:148.7px;letter-spacing:-0.15px;transform:scaleX(0.947)">Proxy:</div>
<div class="t f15" style="left:944.0px;top:148.4px;letter-spacing:-0.15px;transform:scaleX(0.873)">OFF</div>
<div class="t f10" style="left:1159.4px;top:148.2px;letter-spacing:0.12px">Http</div>
<div class="t f12" style="left:893.5px;top:177.2px;letter-spacing:-0.15px;transform:scaleX(0.916)">Data</div>
<div class="t f9" style="left:1046.0px;top:177.2px;letter-spacing:0.00px">Log</div>
<div class="t f9" style="left:1186.3px;top:177.2px;letter-spacing:-0.15px;transform:scaleX(0.936)">Browser</div>
<div class="t f16" style="left:823.4px;top:196.0px;letter-spacing:0.03px">BOT STATUS: SUCCESS</div>
<div class="t f17" style="left:848.4px;top:219.4px;letter-spacing:-0.15px;transform:scaleX(0.969)">*New Text Document - Notepad</div>
<div class="t f17" style="left:826.8px;top:242.8px;letter-spacing:-0.15px;transform:scaleX(0.960)">File</div>
<div class="t f17" style="left:856.8px;top:242.8px;letter-spacing:-0.15px;transform:scaleX(0.934)">Edit</div>
<div class="t f17" style="left:888.6px;top:242.8px;letter-spacing:-0.15px;transform:scaleX(0.968)">Format</div>
<div class="t f17" style="left:938.4px;top:242.8px;letter-spacing:-0.15px;transform:scaleX(0.881)">View</div>
<div class="t f17" style="left:973.8px;top:242.8px;letter-spacing:-0.15px;transform:scaleX(0.998)">Help</div>
<div class="t f18" style="left:823.8px;top:261.5px;letter-spacing:0.11px">CREATED BY</div>
<div class="t f18" style="left:966.5px;top:311.9px;letter-spacing:0.04px">@DX_EXPERT</div>
<div class="t f17" style="left:840.7px;top:388.8px;letter-spacing:-0.15px;transform:scaleX(0.932)">Ln 4, Col 19</div>
<div class="t f17" style="left:969.7px;top:388.8px;letter-spacing:-0.15px;transform:scaleX(0.860)">100%</div>
<div class="t f17" style="left:1017.0px;top:388.8px;letter-spacing:-0.15px;transform:scaleX(0.907)">Windows (CRLF)</div>
<div class="t f17" style="left:1128.7px;top:388.8px;letter-spacing:-0.15px;transform:scaleX(0.892)">UTF-8</div>
<div class="t f19" style="left:86.8px;top:196.7px;letter-spacing:-0.15px;transform:scaleX(0.955)">KEY CHECK</div>
<div class="t f20" style="left:91.4px;top:247.3px;letter-spacing:0.23px">First-name</div>
<div class="t f20" style="left:90.0px;top:297.9px;letter-spacing:0.73px">Last-name</div>
<div class="t f20" style="left:105.8px;top:348.5px;letter-spacing:1.14px">Mobile</div>
<div class="t f20" style="left:107.9px;top:399.1px;letter-spacing:1.18px">Active</div>
<div class="t f20" style="left:98.9px;top:449.7px;letter-spacing:1.32px">Balance</div>
<div class="t f20" style="left:94.4px;top:500.3px;letter-spacing:1.11px">Balance2</div>
<div class="t f20" style="left:104.2px;top:550.9px;letter-spacing:1.56px">Create</div>
<div class="t f21" style="left:91.3px;top:601.0px;letter-spacing:-0.15px;transform:scaleX(0.977)">FUNCTION</div>
<div class="t f22" style="left:97.6px;top:647.4px;letter-spacing:-0.15px;transform:scaleX(0.858)">SWITCH TO LOLISCRIPT</div>
<div class="t f23" style="left:82.5px;top:693.0px;letter-spacing:-0.15px;transform:scaleX(0.927)">Type here to search</div>
<div class="t f24" style="left:1177.0px;top:685.7px;letter-spacing:-0.15px;transform:scaleX(0.973)">10:02 AM</div>
<div class="t f24" style="left:1176.4px;top:702.6px;letter-spacing:-0.15px;transform:scaleX(0.956)">9/21/2023</div>
<div class="t f25" style="left:1253.5px;top:703.5px;letter-spacing:0.00px">4</div>
<div class="t f26" style="left:823.2px;top:411.3px;letter-spacing:0.04px">First_name (Single) = Tester</div>
<div class="t f26" style="left:823.2px;top:426.6px;letter-spacing:0.04px">Last_name (Single) = Man</div>
<div class="t f26" style="left:823.2px;top:441.8px;letter-spacing:0.04px">Mobile_Phone (Single) = 46444</div>
<div class="t f26" style="left:823.2px;top:457.1px;letter-spacing:0.04px">User_Activation (Single) = active</div>
<div class="t f26" style="left:823.2px;top:472.4px;letter-spacing:0.04px">Credit_balance (Single) = 0.0</div>
<div class="t f26" style="left:823.2px;top:487.6px;letter-spacing:0.04px">Available_credit_balance (Single) = 0.0</div>
<div class="t f26" style="left:823.2px;top:502.9px;letter-spacing:0.04px">Create At (Single) = 2023-09-21</div>
<div class="t f26" style="left:823.2px;top:518.2px;letter-spacing:0.04px">Config By (Single) = @DX_EXPERT</div>
</body></html>
